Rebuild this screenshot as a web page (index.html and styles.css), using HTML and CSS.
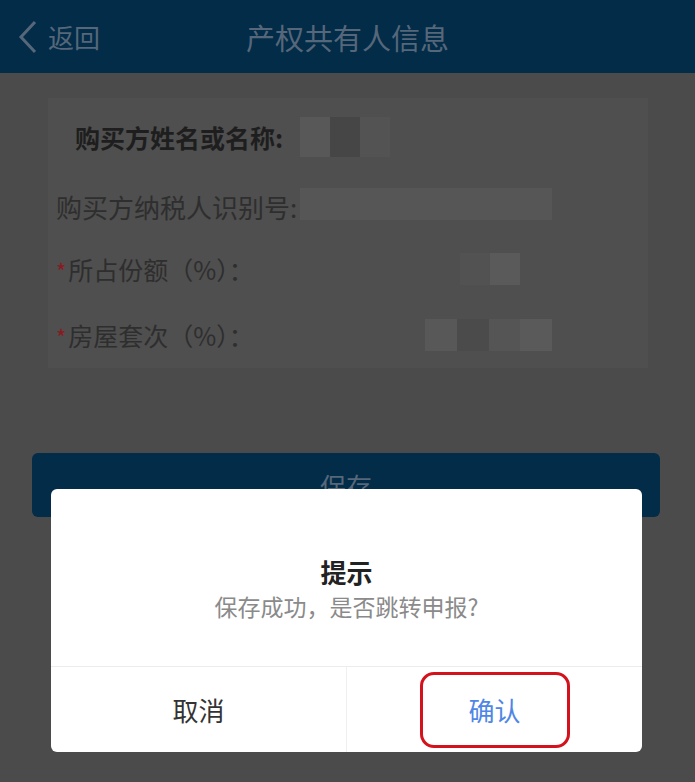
FILE: index.html
```html
<!DOCTYPE html>
<html lang="zh-CN">
<head>
    <meta charset="UTF-8">
    <meta name="viewport" content="width=device-width, initial-scale=1.0">
    <title>产权共有人信息</title>
    <link rel="stylesheet" href="styles.css">
</head>
<body>

<div class="header">
    <a class="back" href="#">
        <svg class="back-icon" width="20" height="34" viewBox="0 0 20 34">
            <polyline points="17,2 3,17 17,32" fill="none" stroke="#56677a" stroke-width="3"/>
        </svg>
        <span>返回</span>
    </a>
    <div class="title">产权共有人信息</div>
</div>

<div class="card">
    <div class="row">
        <span class="label label-main">购买方姓名或名称:</span>
        <span class="blur blur-name">
            <i class="px" style="background:#585858"></i><i class="px" style="background:#464646"></i><i class="px" style="background:#535353"></i>
        </span>
    </div>
    <div class="row row-tax">
        <span class="label label-tax">购买方纳税人识别号:</span>
        <span class="blur blur-tax"></span>
    </div>
    <div class="row">
        <span class="label"><em class="star">*</em>所占份额（%）：</span>
        <span class="blur blur-share">
            <i class="px" style="background:#525252"></i><i class="px" style="background:#5a5a5a"></i>
        </span>
    </div>
    <div class="row">
        <span class="label"><em class="star">*</em>房屋套次（%）：</span>
        <span class="blur blur-count">
            <i class="px" style="background:#585858"></i><i class="px" style="background:#4b4b4b"></i><i class="px" style="background:#555555"></i><i class="px" style="background:#5a5a5a"></i>
        </span>
    </div>
</div>

<button class="save-btn">保存</button>

<div class="dialog">
    <div class="dialog-body">
        <div class="dialog-title">提示</div>
        <div class="dialog-msg">保存成功，是否跳转申报?</div>
    </div>
    <div class="dialog-btns">
        <div class="dialog-btn cancel">取消</div>
        <div class="dialog-btn confirm"><span class="mark">确认</span></div>
    </div>
</div>

</body>
</html>
```

FILE: styles.css
```css
body {
    margin: 0;
    width: 695px;
    height: 782px;
    background-color: #4b4b4b;
    font-family: "Noto Sans CJK SC", "Noto Sans", sans-serif;
    position: relative;
    overflow: hidden;
}

.header {
    height: 73px;
    background-color: #022c48;
    display: flex;
    align-items: center;
    position: relative;
}

.back {
    display: flex;
    align-items: center;
    margin-left: 18px;
    color: #56677a;
    font-size: 26px;
    text-decoration: none;
}

.back-icon {
    margin-right: 10px;
}

.title {
    position: absolute;
    left: 0;
    right: 0;
    text-align: center;
    color: #56677a;
    font-size: 29px;
    pointer-events: none;
}

.card {
    margin: 25px 47px 0 48px;
    height: 264px;
    padding-top: 6px;
    background-color: #4f4f4f;
}

.row {
    height: 66px;
    display: flex;
    align-items: center;
    position: relative;
}

.row-tax {
    align-items: flex-start;
}

.row-tax .label,
.row-tax .blur {
    margin-top: 18px;
}

.label {
    font-size: 25px;
    color: #2e2e2e;
    padding-left: 8px;
    white-space: nowrap;
}

.label-main {
    padding-left: 27px;
    font-weight: bold;
    color: #1e1e1e;
}

.label-tax {
    font-size: 26px;
}

.star {
    font-style: normal;
    color: #8a1a20;
    margin-right: 2px;
    font-size: 22px;
}

.blur {
    position: absolute;
    display: flex;
    background-color: #575757;
}

.px {
    flex: 1;
    height: 100%;
}

.blur-name {
    left: 252px;
    width: 90px;
    height: 40px;
}

.blur-tax {
    left: 252px;
    width: 252px;
    height: 32px;
    background-color: #565656;
}

.blur-share {
    left: 412px;
    width: 60px;
    height: 32px;
}

.blur-count {
    left: 377px;
    width: 127px;
    height: 32px;
}

.save-btn {
    display: block;
    margin: 85px 35px 0 32px;
    width: 628px;
    height: 64px;
    border: none;
    border-radius: 6px;
    background-color: #022c48;
    color: #56677a;
    font-family: inherit;
    font-size: 26px;
}

/* modal, sits over the page */
.dialog {
    position: absolute;
    left: 51px;
    top: 489px;
    width: 591px;
    height: 263px;
    background-color: #fff;
    border-radius: 6px;
    display: flex;
    flex-direction: column;
}

.dialog-body {
    padding: 64px 0 45px;
    text-align: center;
    border-bottom: 1px solid #ececec;
}

.dialog-title {
    font-size: 26px;
    font-weight: bold;
    line-height: 38px;
    color: #222;
}

.dialog-msg {
    font-size: 23px;
    line-height: 30px;
    color: #8a8a8a;
}

.dialog-btns {
    flex: 1;
    display: flex;
}

.dialog-btn {
    flex: 1;
    display: flex;
    justify-content: center;
    align-items: center;
    font-size: 26px;
}

.cancel {
    color: #333;
    border-right: 1px solid #f0f0f0;
}

.confirm {
    color: #4f86e6;
}

.mark {
    box-sizing: border-box;
    width: 150px;
    height: 76px;
    display: flex;
    justify-content: center;
    align-items: center;
    border: 3px solid #d4121c;
    border-radius: 14px;
}
```
